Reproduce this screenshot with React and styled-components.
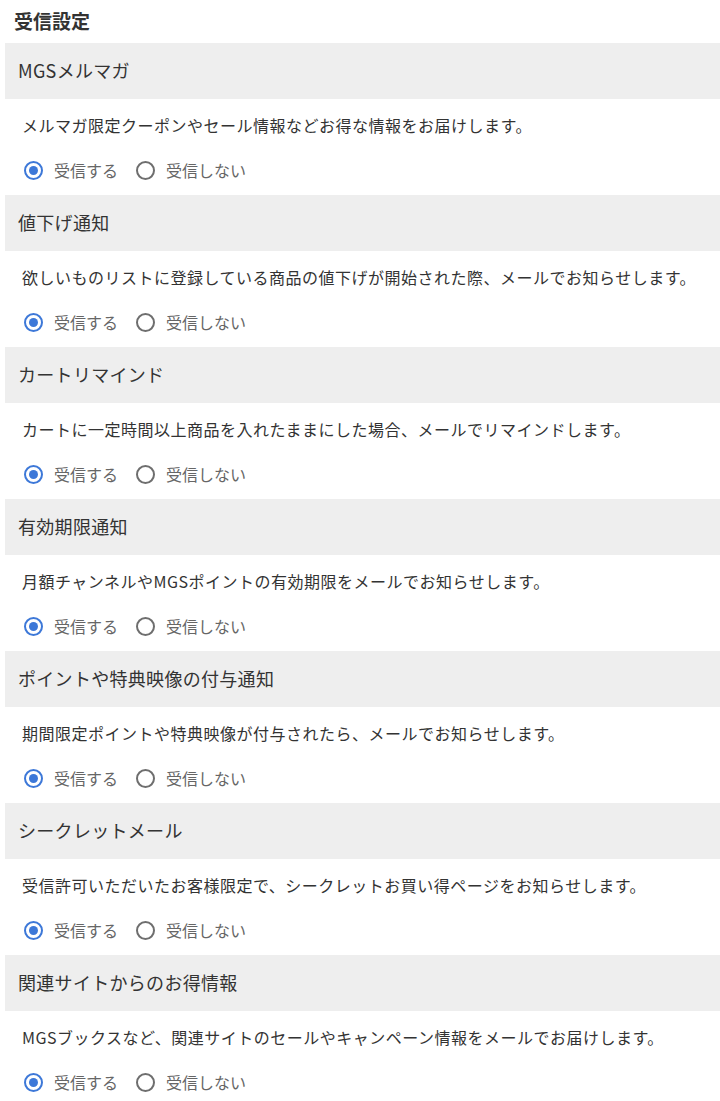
import React, { useState } from "react"
import styled, { createGlobalStyle } from "styled-components"

const GlobalStyle = createGlobalStyle`
  html, body {
    margin: 0;
    padding: 0;
    background: #ffffff;
  }
  body {
    font-family: "Noto Sans CJK JP", "Noto Sans", sans-serif;
    color: #333333;
  }
`

const Page = styled.div`
  padding: 8px 0 0 5px;
`

const Title = styled.h2`
  margin: 0 0 9px 9px;
  font-size: 19px;
  line-height: 26px;
  font-weight: bold;
  color: #333333;
`

const Section = styled.section`
  display: flex;
  flex-direction: column;
`

const SectionHeader = styled.h3`
  margin: 0;
  height: 56px;
  display: flex;
  align-items: center;
  padding: 0 13px 2px;
  box-sizing: border-box;
  background: #eeeeee;
  font-size: 18px;
  font-weight: normal;
  letter-spacing: 0.3px;
  color: #333333;
`

const Body = styled.div`
  display: flex;
  flex-direction: column;
  gap: 21px;
  padding: 14px 0 13px 17px;
`

const Description = styled.p`
  margin: 0;
  font-size: 16px;
  line-height: 24px;
  letter-spacing: 0.5px;
  color: #333333;
  white-space: nowrap;
`

const RadioRow = styled.div`
  display: flex;
  align-items: center;
  gap: 18px;
  height: 24px;
  padding-left: 2px;
`

const RadioLabel = styled.label`
  display: flex;
  align-items: center;
  gap: 11px;
  cursor: pointer;
  font-size: 16px;
  line-height: 24px;
  color: #666666;

  input {
    display: none;
  }
`

const Circle = styled.span`
  box-sizing: border-box;
  width: 19px;
  height: 19px;
  border-radius: 50%;
  border: 2px solid ${(p) => (p.$checked ? "#3d78d8" : "#6e6e6e")};
  display: flex;
  align-items: center;
  justify-content: center;

  &::after {
    content: "";
    width: 9px;
    height: 9px;
    border-radius: 50%;
    background: #3d78d8;
    display: ${(p) => (p.$checked ? "block" : "none")};
  }
`

const settings = [
  { id: "mailmag", title: "MGSメルマガ", text: "メルマガ限定クーポンやセール情報などお得な情報をお届けします。" },
  { id: "price", title: "値下げ通知", text: "欲しいものリストに登録している商品の値下げが開始された際、メールでお知らせします。" },
  { id: "cart", title: "カートリマインド", text: "カートに一定時間以上商品を入れたままにした場合、メールでリマインドします。" },
  { id: "expire", title: "有効期限通知", text: "月額チャンネルやMGSポイントの有効期限をメールでお知らせします。" },
  { id: "point", title: "ポイントや特典映像の付与通知", text: "期間限定ポイントや特典映像が付与されたら、メールでお知らせします。" },
  { id: "secret", title: "シークレットメール", text: "受信許可いただいたお客様限定で、シークレットお買い得ページをお知らせします。" },
  { id: "related", title: "関連サイトからのお得情報", text: "MGSブックスなど、関連サイトのセールやキャンペーン情報をメールでお届けします。" },
]

const Radio = ({ name, checked, onChange, children }) => (
  <RadioLabel>
    <input type="radio" name={name} checked={checked} onChange={onChange} />
    <Circle $checked={checked} />
    {children}
  </RadioLabel>
)

export default function App() {
  const [values, setValues] = useState(() =>
    Object.fromEntries(settings.map((s) => [s.id, true]))
  )

  const set = (id, v) => setValues((prev) => ({ ...prev, [id]: v }))

  return (
    <>
      <GlobalStyle />
      <Page>
        <Title>受信設定</Title>
        {settings.map((s) => (
          <Section key={s.id}>
            <SectionHeader>{s.title}</SectionHeader>
            <Body>
              <Description>{s.text}</Description>
              <RadioRow>
                <Radio name={s.id} checked={values[s.id]} onChange={() => set(s.id, true)}>
                  受信する
                </Radio>
                <Radio name={s.id} checked={!values[s.id]} onChange={() => set(s.id, false)}>
                  受信しない
                </Radio>
              </RadioRow>
            </Body>
          </Section>
        ))}
      </Page>
    </>
  )
}
